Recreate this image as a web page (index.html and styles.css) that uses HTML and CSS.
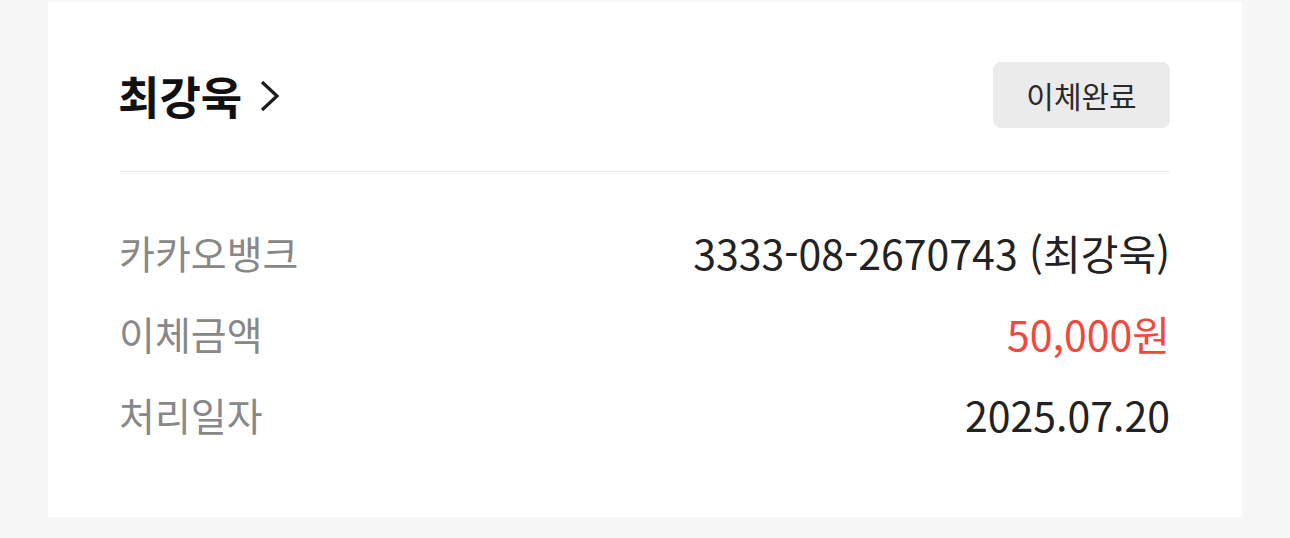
FILE: index.html
```html
<!DOCTYPE html>
<html lang="ko">
  <head>
    <meta charset="UTF-8" />
    <meta name="viewport" content="width=device-width, initial-scale=1.0" />
    <title>이체 내역</title>
    <link rel="stylesheet" href="styles.css">
  </head>
  <body>
    <div class="page">
      <div class="card">
        <div class="card-header">
          <a class="receiver" href="#">
            <span class="receiver-name">최강욱</span>
            <svg class="chevron" width="24" height="34" viewBox="0 0 24 34" aria-hidden="true">
              <path d="M4 3 L19 17 L4 31" fill="none" stroke="#1c1c1c" stroke-width="3.2" />
            </svg>
          </a>
          <span class="status-badge">이체완료</span>
        </div>

        <dl class="detail-list">
          <div class="detail-row">
            <dt>카카오뱅크</dt>
            <dd>3333-08-2670743 (최강욱)</dd>
          </div>
          <div class="detail-row">
            <dt>이체금액</dt>
            <dd class="amount">50,000원</dd>
          </div>
          <div class="detail-row">
            <dt>처리일자</dt>
            <dd>2025.07.20</dd>
          </div>
        </dl>
      </div>
    </div>
  </body>
</html>
```

FILE: styles.css
```css
body {
  margin: 0;
  background-color: #f7f7f7;
  font-family: "Noto Sans CJK KR", "Noto Sans", sans-serif;
  color: #222;
}

.page {
  padding: 2px 48px 21px;
}

.card {
  background-color: #fff;
  padding: 0 72px 63px;
}

.card-header {
  display: flex;
  align-items: center;
  justify-content: space-between;
  padding: 60px 0 43px;
  border-bottom: 1px solid #ececec;
}

.receiver {
  display: flex;
  align-items: center;
  gap: 16px;
  text-decoration: none;
  color: #111;
}

.receiver-name {
  font-size: 45px;
  font-weight: 700;
  line-height: 1;
  margin-left: -2px;
}

.chevron {
  display: block;
  margin-top: 2px;
}

.status-badge {
  display: flex;
  align-items: center;
  justify-content: center;
  width: 177px;
  height: 66px;
  background-color: #ebebeb;
  border-radius: 8px;
  font-size: 30px;
  color: #2a2a2a;
}

.detail-list {
  margin: 0;
  padding-top: 39px;
}

.detail-row {
  display: flex;
  align-items: center;
  justify-content: space-between;
  height: 81px;
}

.detail-row dt {
  font-size: 39px;
  color: #888;
  margin-left: -1px;
}

.detail-row dd {
  margin: 0;
  font-size: 41px;
  color: #222;
}

.detail-row .amount {
  color: #f2483b;
}
```
